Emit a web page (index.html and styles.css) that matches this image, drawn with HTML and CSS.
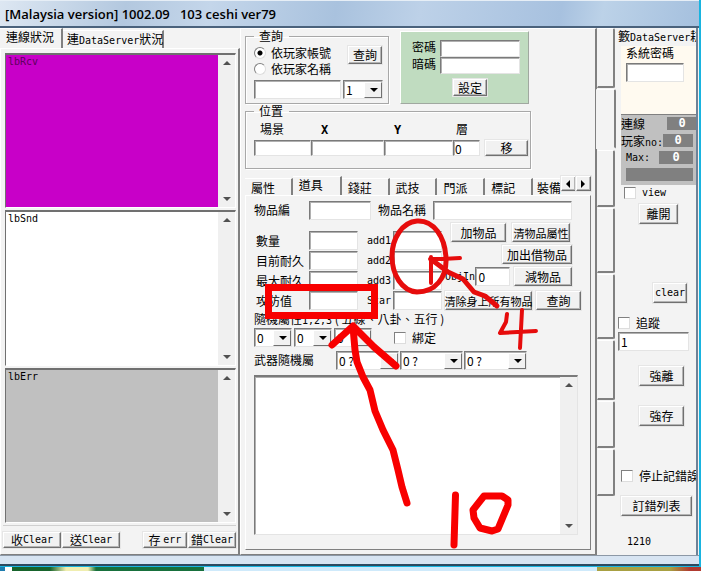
FILE: index.html
```html
<!DOCTYPE html>
<html lang="zh-Hant">
<head>
<meta charset="utf-8">
<title>[Malaysia version] 1002.09 103 ceshi ver79</title>
<link rel="stylesheet" href="styles.css">
</head>
<body>
<div class="window">
  <header class="titlebar"><h1>[Malaysia version] 1002.09 &nbsp; 103 ceshi ver79</h1></header>
  <main class="body">
    <section class="logs">
      <nav class="tabs log-tabs">
        <button class="tab on">連線狀況</button><button class="tab">連<span class="lat">DataServer</span>狀況</button>
      </nav>
      <div class="log-panel">
        <div class="list purple"><span class="lat">lbRcv</span><div class="scroll"><i class="up"></i><i class="down"></i></div></div>
        <div class="list white"><span class="lat">lbSnd</span><div class="scroll"><i class="up"></i><i class="down"></i></div></div>
        <div class="list gray"><span class="lat">lbErr</span><div class="scroll"><i class="up"></i><i class="down"></i></div></div>
        <div class="log-buttons">
          <button class="btn w58">收<span class="lat">Clear</span></button><button class="btn w58">送<span class="lat">Clear</span></button>
          <button class="btn w44 push">存&nbsp;<span class="lat">err</span></button><button class="btn w48">錯<span class="lat">Clear</span></button>
        </div>
      </div>
    </section>

    <section class="center">
      <div class="top">
        <fieldset class="group query">
          <legend>查詢</legend>
          <div class="query-row">
            <div class="radios">
              <label><input type="radio" name="by" checked>依玩家帳號</label>
              <label><input type="radio" name="by">依玩家名稱</label>
            </div>
            <button class="btn w34">查詢</button>
          </div>
          <div class="query-input">
            <input class="box grow" type="text" aria-label="玩家">
            <span class="combo w40"><select aria-label="伺服器"><option>1</option></select></span>
          </div>
        </fieldset>
        <form class="password">
          <label for="pw1">密碼</label><input class="box" id="pw1" type="text">
          <label for="pw2">暗碼</label><input class="box" id="pw2" type="text">
          <button class="btn w34" type="button">設定</button>
        </form>
      </div>
      <fieldset class="group place">
        <legend>位置</legend>
        <label for="scene">場景</label><label for="px"><b>X</b></label><label for="py"><b>Y</b></label><label for="layer">層</label><span></span>
        <input class="box" id="scene" type="text"><input class="box" id="px" type="text"><input class="box" id="py" type="text"><input class="box" id="layer" type="text" value="0"><button class="btn">移</button>
      </fieldset>
      <nav class="tabs item-tabs">
        <button class="tab">屬性</button><button class="tab on">道具</button><button class="tab">錢莊</button><button class="tab">武技</button><button class="tab">門派</button><button class="tab">標記</button><button class="tab cut">裝備</button>
        <button class="btn arrow" aria-label="向左"><i class="left"></i></button><button class="btn arrow" aria-label="向右"><i class="right"></i></button>
      </nav>
      <div class="item-panel">
        <div class="item-name">
          <label for="item">物品編</label><input class="box w62" id="item" type="text" autofocus>
          <label for="iname">物品名稱</label><input class="box w141" id="iname" type="text">
        </div>
        <div class="item-main">
          <div class="fields">
            <label for="qty">數量</label><input class="box" id="qty" type="text"><label class="lat" for="add1">add1</label><input class="box" id="add1" type="text">
            <label for="cur">目前耐久</label><input class="box" id="cur" type="text"><label class="lat" for="add2">add2</label><input class="box" id="add2" type="text">
            <label for="max">最大耐久</label><input class="box" id="max" type="text"><label class="lat" for="add3">add3</label><input class="box" id="add3" type="text">
            <label for="atk">攻防值</label><input class="box" id="atk" type="text"><label class="lat" for="star">Star</label><input class="box" id="star" type="text">
          </div>
          <div class="actions">
            <div class="line inset"><button class="btn w55">加物品</button><button class="btn w58 tight">清物品屬性</button></div>
            <div class="line end"><button class="btn w70">加出借物品</button></div>
            <div class="line end"><label class="lat obj" for="obj">ObjIn</label><input class="box w35" id="obj" type="text" value="0"><button class="btn w58">減物品</button></div>
            <div class="line last"><button class="btn w87 tight">清除身上所有物品</button><button class="btn w45">查詢</button></div>
          </div>
        </div>
        <p class="random">隨機屬性<span class="lat">1,2,3</span> ( 五線、八卦、五行 )</p>
        <div class="random-row">
          <span class="combo w38"><select aria-label="隨機屬性1"><option>0</option></select></span>
          <span class="combo w38"><select aria-label="隨機屬性2"><option>0</option></select></span>
          <span class="combo w38"><select aria-label="隨機屬性3"><option>0</option></select></span>
          <label class="check bind"><input type="checkbox">綁定</label>
        </div>
        <div class="weapon-row">
          <span class="weapon">武器隨機屬</span>
          <span class="combo w63"><select aria-label="武器屬性1"><option>0 ?</option></select></span>
          <span class="combo w63"><select aria-label="武器屬性2"><option>0 ?</option></select></span>
          <span class="combo w63"><select aria-label="武器屬性3"><option>0 ?</option></select></span>
        </div>
        <div class="memo"><textarea aria-label="記錄"></textarea><div class="scroll"><i class="up"></i><i class="down"></i></div></div>
      </div>
    </section>

    <nav class="side-tabs" aria-label="分頁">
      <button class="s60" aria-label="分頁 1"></button><button class="s60 on" aria-label="分頁 2"></button><button class="s58" aria-label="分頁 3"></button><button class="s66" aria-label="分頁 4"></button><button class="s66" aria-label="分頁 5"></button><button class="s60" aria-label="分頁 6"></button><button class="s48" aria-label="分頁 7"></button><button class="s48" aria-label="分頁 8"></button>
    </nav>

    <aside class="server">
      <h2>籔<span class="lat">DataServer</span>耕</h2>
      <div class="system"><label for="sys">系統密碼</label><input class="box" id="sys" type="text"></div>
      <dl class="stats">
        <div><dt>連線</dt><dd class="w30">0</dd></div>
        <div class="mid"><dt>玩家<span class="lat">no:</span></dt><dd class="w30">0</dd></div>
        <div class="mid"><dt class="lat ind">Max:</dt><dd class="w34">0</dd></div>
        <div class="bar"></div>
      </dl>
      <label class="check c-view"><input type="checkbox"><span class="lat">view</span></label>
      <button class="btn b-leave">離開</button>
      <button class="btn b-clear"><span class="lat">clear</span></button>
      <label class="check c-trace"><input type="checkbox">追蹤</label>
      <input class="box trace" type="text" value="1" aria-label="追蹤">
      <button class="btn b-force">強離</button>
      <button class="btn b-save">強存</button>
      <label class="check c-stop"><input type="checkbox">停止記錯誤</label>
      <button class="btn b-errors">訂錯列表</button>
      <p class="lat count">1210</p>
    </aside>
  </main>
  <footer class="status"></footer>
</div>
<div class="desktop"></div>

<svg class="marks" width="701" height="571" viewBox="0 0 701 571" fill="none" stroke="#f80000" stroke-linecap="round" stroke-linejoin="round" aria-hidden="true">
  <path stroke-width="7" stroke-linejoin="miter" d="M268.500 287.500H374.500V315.500H268.500Z"/>
  <path stroke-width="7" d="M332 345L353 326L374 347L396 366M353 327L355 350L357 362L363 377L370 390L375 411L383 430L393 450L398 470L402 487L407 503"/>
  <path stroke-width="5" stroke="#e60c0c" d="M417 221C402 222 392 239 392 256C392 275 402 291 417 292C435 292 447 278 446 258C445 237 434 220 417 221Z"/>
  <path stroke-width="4" stroke="#e60c0c" d="M460 258L442 259L430 259M431 257V283"/>
  <path stroke-width="5" stroke="#e60c0c" d="M432 260L448 272L463 279L474 292L485 296L497 306"/>
  <path stroke-width="4" stroke="#e60c0c" d="M507 314L506 322L500 333L536 331M522 310L520 348"/>
  <path stroke-width="7" d="M455.500 495L454 545M484 496L473 510L474 518L480 528L492 531L498 529L508 505V500L502 496Z"/>
</svg>
</body>
</html>
```

FILE: styles.css
```css
* { box-sizing: border-box; }
body {
  margin: 0;
  min-height: 100vh;
  display: flex;
  flex-direction: column;
  position: relative;
  color: #000;
  background: #f3f3f3;
  font: 12px/14px "Noto Sans CJK TC", sans-serif;
  overflow-x: hidden;
}
button, input, select, textarea { font: inherit; color: inherit; margin: 0; }
input:focus { outline: 0; }
h1, h2, p, dl, dd, fieldset { margin: 0; }
.lat { font-family: "DejaVu Sans Mono", monospace; font-size: 10px; }
b { font: bold 12px/14px "DejaVu Sans Mono", monospace; }

.window {
  flex: 1;
  display: flex;
  flex-direction: column;
  border-right: 2px solid #18b4e0;
  border-bottom: 1px solid #18b4e0;
}
.titlebar {
  height: 28px;
  padding: 4px 5px 0;
  border-top: 1px solid #e6eef6;
  border-bottom: 2px solid #4a627c;
  background: linear-gradient(100deg, #dde7f2 0%, #b3c8df 18%, #c4d6ea 30%, #a9c2de 48%, #bdd1e8 60%, #a7c1df 80%, #bcd2e8 86%, #a5c0de 100%);
}
h1 { font: 600 13px/18px "Open Sans", sans-serif; white-space: nowrap; }
.body {
  flex: 1;
  display: grid;
  grid-template-columns: 240px minmax(0, 1fr) 19px 80px;
  margin-right: 1px;
  border-right: 2px solid #6d8298;
  background: #f3f3f3;
}
.status { height: 11px; background: #d7e4f2; border-top: 1px solid #8c98a6; border-bottom: 2px solid #2c4a60; }
.desktop { height: 4px; background: linear-gradient(90deg, #1d7cae 0 5px, #fff 5px 12px, #17642c 12px 50px, #f0eeb0 66px 88px, #17703c 96px 204px, #cfeafb 204px 597px, #a8a042 597px 670px, #b03a30 690px); }

/* Raised and sunken surfaces */
.btn {
  height: 20px;
  padding: 0;
  flex: none;
  background: #f1f1f1;
  border: 1px solid;
  border-color: #fff #707070 #707070 #fff;
  box-shadow: inset -1px -1px #b4b4b4, 0 0 0 1px #e6e6e6;
  white-space: nowrap;
  line-height: 16px;
  display: flex;
  justify-content: center;
  align-items: center;
}
.btn .lat { line-height: 16px; }
.box, .combo, .memo {
  background: #fff;
  border: 1px solid;
  border-color: #7a7a7a #e4e4e4 #e4e4e4 #7a7a7a;
  box-shadow: inset 1px 1px #b0b0b0;
}
.box { width: 100%; height: 19px; padding: 0 2px; min-width: 0; border-radius: 0; }
.combo { position: relative; height: 19px; display: block; flex: none; }
.combo select { width: 100%; height: 17px; padding: 0 2px; border: 0; background: none; appearance: none; line-height: 16px; }
.combo::before {
  content: "";
  position: absolute;
  right: 0; top: 1px; bottom: 0;
  width: 16px;
  background: #f1f1f1;
  border: 1px solid;
  border-color: #fff #707070 #707070 #fff;
  pointer-events: none;
}
.combo::after {
  content: "";
  position: absolute;
  right: 4px; top: 7px;
  border: 4px solid transparent;
  border-top-color: #000;
  border-bottom: 0;
  pointer-events: none;
}
.scroll { width: 17px; background: #f0f0f0; display: flex; flex-direction: column; justify-content: space-between; align-items: center; padding: 6px 0; }
.up, .down, .left, .right { width: 0; height: 0; border: 4px solid transparent; }
.up { border-bottom-color: #505050; border-top: 0; }
.down { border-top-color: #505050; border-bottom: 0; }
.left { border-right-color: #000; border-left: 0; }
.right { border-left-color: #000; border-right: 0; }

.w30 { width: 30px; } .w34 { width: 34px; } .w35 { width: 35px; } .w38 { width: 38px; }
.w40 { width: 40px; } .w44 { width: 44px; } .w45 { width: 45px; } .w48 { width: 48px; }
.w55 { width: 55px; } .w58 { width: 58px; } .w62 { width: 62px; } .w63 { width: 63px; }
.w70 { width: 70px; } .w87 { width: 87px; } .w141 { width: 141px; }
.tight { font-size: 11px; }

/* Tabs */
.tabs { display: flex; align-items: flex-end; }
.tab {
  height: 17px;
  padding: 0 0 0 6px;
  border: 0;
  border-top: 1px solid #fff;
  border-right: 2px solid #808080;
  background: #f3f3f3;
  white-space: nowrap;
  text-align: left;
  line-height: 15px;
}
.tab.on { height: 19px; padding-bottom: 4px; }

/* Left column */
.logs { display: flex; flex-direction: column; }
.log-tabs .tab { width: 101px; height: 18px; padding-left: 4px; padding-bottom: 3px; }
.log-tabs .on { width: 63px; height: 20px; padding-left: 6px; padding-bottom: 6px; }
.log-panel {
  flex: 1;
  display: flex;
  flex-direction: column;
  gap: 2px;
  padding: 4px 2px 6px 4px;
  border: 1px solid;
  border-color: #fff #808080 #808080 #fff;
  border-right-width: 2px;
}
.list {
  flex: 1;
  display: flex;
  justify-content: space-between;
  padding-left: 2px;
  border: 1px solid;
  border-color: #707070 #fff #fff #707070;
  border-top-width: 2px;
}
.list > .lat { line-height: 14px; }
.purple { background: #c800c8; color: #5c005c; }
.white { background: #fff; }
.gray { background: #c0c0c0; }
.log-buttons { display: flex; gap: 1px; padding-top: 6px; margin-left: -2px; border-top: 1px solid #d0d0d0; }
.log-buttons .btn { height: 16px; line-height: 13px; }
.push { margin-left: auto; }

/* Center column */
.center {
  display: flex;
  flex-direction: column;
  padding: 0 4px 4px 4px;
  border: 1px solid;
  border-color: #fff #808080 #808080 #fff;
  border-right-width: 2px;
}
.top { display: flex; gap: 11px; align-items: flex-end; height: 75px; }
.group { border: 1px solid #a8a8a8; box-shadow: inset 1px 1px #fff, 1px 1px #fff; padding: 0; min-width: 0; }
legend { padding: 0 6px 0 5px; line-height: 14px; }
.query { width: 144px; height: 75px; padding: 3px 5px 0 8px; }
.query-row { display: flex; justify-content: space-between; padding-right: 1px; }
.radios { display: grid; gap: 2px; }
.radios label { display: flex; align-items: center; gap: 5px; }
.radios input, .check input { appearance: none; width: 12px; height: 12px; flex: none; background: #fff; border: 1px solid; border-color: #808080 #ddd #ddd #808080; }
.radios input { border-radius: 50%; }
.radios input:checked { background: radial-gradient(#000 0 2px, #fff 3px); }
.query-row .btn { height: 18px; }
.query-input { display: flex; gap: 2px; margin-top: 4px; }
.grow { flex: 1; }
.password {
  display: grid;
  grid-template-columns: 28px 80px;
  justify-content: end;
  align-content: start;
  width: 129px;
  height: 73px;
  padding: 8px 8px 0 0;
  background: #c0dcc0;
  border: 1px solid;
  border-color: #fff #a0a8a0 #a0a8a0 #fff;
}
.password .box { height: 17px; }
.password .btn { grid-column: 1 / 3; justify-self: center; height: 17px; margin: 5px 0 0 8px; }
.place {
  display: grid;
  grid-template-columns: 57px 73px 69px 27px 43px;
  row-gap: 3px;
  width: 286px;
  padding: 4px 0 12px 8px;
}
.place label { padding-left: 6px; }
.place label:nth-of-type(2), .place label:nth-of-type(3) { padding-left: 10px; }
.place label:nth-of-type(4) { padding-left: 3px; }
.place .box { height: 16px; padding: 0 1px; }
.place .btn { height: 16px; margin-left: 5px; margin-right: -5px; }
.item-tabs { margin-top: 7px; }
.item-tabs .tab { width: 48px; }
.item-tabs .tab.on { width: 49px; }
.item-tabs .tab.cut { width: 28px; padding-left: 4px; border-right: 0; overflow: hidden; }
.arrow { width: 15px; height: 15px; align-self: flex-start; }
.item-panel {
  flex: 1;
  display: flex;
  flex-direction: column;
  padding: 5px 12px 14px 8px;
  border: 1px solid;
  border-color: #fff #808080 #808080 #fff;
}
.item-name { display: flex; }
.item-name label { width: 55px; padding: 2px 0 0; }
.item-name label + .w62 + label { padding-left: 7px; width: 62px; }
.item-name .w141 { flex: 1; margin-right: 6px; }
.item-main { display: flex; margin-top: 3px; }
.fields { display: grid; grid-template-columns: 55px 49px 35px 49px; row-gap: 1px; align-content: start; align-items: center; padding-top: 8px; flex: none; }
.fields label { padding-left: 2px; }
.fields label.lat { padding-left: 9px; }
.actions { display: grid; gap: 3px; align-content: start; }
.line { display: flex; width: 130px; gap: 4px; }
.line .btn { height: 19px; }
.line.inset { padding-left: 9px; gap: 6px; }
.line.end { justify-content: flex-end; align-items: center; }
.line.last { margin-top: 2px; padding-left: 3px; }
.obj { width: 34px; padding-left: 3px; margin-right: -4px; }
.random { margin-top: 2px; }
.random-row { display: flex; gap: 2px; }
.check { display: flex; align-items: center; gap: 6px; white-space: nowrap; }
.bind { margin-left: 20px; }
.weapon-row { display: flex; gap: 1px; margin: 4px 0 5px; }
.weapon { width: 81px; padding-top: 2px; }
.memo { flex: 1; display: flex; border-top-width: 2px; }
.memo textarea { flex: 1; border: 0; resize: none; background: none; overflow: hidden; }

/* Vertical page tabs */
.side-tabs { display: flex; flex-direction: column; gap: 1px; }
.side-tabs button { width: 18px; padding: 0; border: 1px solid; border-color: #fff #808080 #808080 #f3f3f3; border-right-width: 2px; border-bottom-width: 2px; border-radius: 0 2px 2px 0; background: #f3f3f3; }
.side-tabs .on { width: 20px; margin-left: -1px; border-bottom-color: #f3f3f3; }
.s60 { height: 60px; } .s58 { height: 57px; } .s66 { height: 65px; } .s48 { height: 47px; }

/* Server column */
.server { display: flex; flex-direction: column; align-items: flex-start; padding-left: 2px; overflow: hidden; }
h2 { font: inherit; white-space: nowrap; align-self: stretch; overflow: hidden; line-height: 16px; }
.system { align-self: stretch; height: 69px; margin-left: 3px; padding-left: 5px; background: #fffaf0; border-bottom: 1px solid #808080; }
.system label { display: block; height: 17px; }
.system .box { width: 58px; }
.stats { align-self: stretch; height: 70px; margin-left: 3px; background: #c0c0c0; display: grid; grid-template-rows: repeat(4, 13px); gap: 4px 0; padding-top: 2px; }
.stats div { display: flex; justify-content: space-between; white-space: nowrap; }
.stats .mid { padding-right: 4px; }
.stats dt { line-height: 13px; }
.stats .ind { padding-left: 5px; }
.stats dd { background: #808080; color: #fff; text-align: center; font: bold 12px/13px "DejaVu Sans Mono", monospace; }
.stats .bar { margin: 0 4px 0 5px; background: #808080; }
.c-view { margin: 1px 0 0 6px; }
.b-leave { width: 39px; margin: 4px 0 0 21px; }
.b-clear { width: 34px; margin: 59px 0 0 35px; }
.c-trace { margin-top: 13px; }
.server .trace { width: 71px; margin-top: 2px; }
.b-force { width: 45px; margin: 15px 0 0 21px; }
.b-save { width: 45px; margin: 20px 0 0 21px; }
.c-stop { margin: 43px 0 0 3px; }
.b-errors { width: 71px; margin: 13px 0 0 3px; }
.count { margin: 19px 0 0 9px; }

.marks { position: absolute; left: 0; top: 0; pointer-events: none; }
```
